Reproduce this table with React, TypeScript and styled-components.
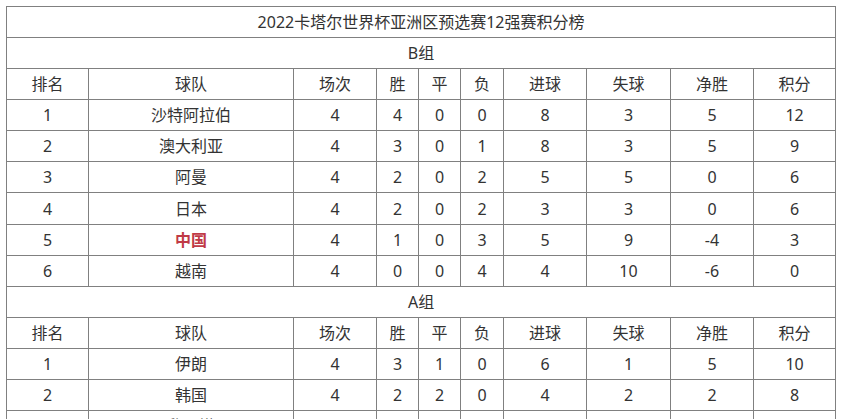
import React from "react";
import styled, { createGlobalStyle } from "styled-components";

const GlobalStyle = createGlobalStyle`
  html, body {
    margin: 0;
    padding: 0;
    background: #ffffff;
    overflow: hidden;
  }
  body {
    font-family: "Noto Sans", "Noto Sans CJK SC", sans-serif;
  }
`;

const Page = styled.div`
  padding: 6px;
`;

const Table = styled.table`
  border-collapse: collapse;
  table-layout: fixed;
  width: 830px;
  color: #333333;
  font-size: 16px;
`;

const Row = styled.tr`
  height: 31.08px;
`;

const Cell = styled.td<{ $highlight?: boolean }>`
  border: 1px solid #808080;
  padding: 0;
  text-align: center;
  vertical-align: middle;
  line-height: 20px;
  white-space: nowrap;
  font-weight: ${(p) => (p.$highlight ? 700 : 400)};
  color: ${(p) => (p.$highlight ? "#c03a46" : "#333333")};
`;

const columns = [82, 205, 83, 42, 42, 43, 83, 84, 83, 82];
const headers = ["排名", "球队", "场次", "胜", "平", "负", "进球", "失球", "净胜", "积分"];

type Team = { row: (string | number)[]; highlight?: boolean };

const groupB: Team[] = [
  { row: [1, "沙特阿拉伯", 4, 4, 0, 0, 8, 3, 5, 12] },
  { row: [2, "澳大利亚", 4, 3, 0, 1, 8, 3, 5, 9] },
  { row: [3, "阿曼", 4, 2, 0, 2, 5, 5, 0, 6] },
  { row: [4, "日本", 4, 2, 0, 2, 3, 3, 0, 6] },
  { row: [5, "中国", 4, 1, 0, 3, 5, 9, -4, 3], highlight: true },
  { row: [6, "越南", 4, 0, 0, 4, 4, 10, -6, 0] },
];

const groupA: Team[] = [
  { row: [1, "伊朗", 4, 3, 1, 0, 6, 1, 5, 10] },
  { row: [2, "韩国", 4, 2, 2, 0, 4, 2, 2, 8] },
  { row: [3, "黎巴嫩", 4, 1, 2, 1, 3, 3, 0, 5] },
];

const Group: React.FC<{ name: string; teams: Team[] }> = ({ name, teams }) => (
  <>
    <Row>
      <Cell colSpan={10}>{name}</Cell>
    </Row>
    <Row>
      {headers.map((h) => (
        <Cell key={h}>{h}</Cell>
      ))}
    </Row>
    {teams.map((t) => (
      <Row key={String(t.row[1])}>
        {t.row.map((v, i) => (
          <Cell key={i} $highlight={t.highlight && i === 1}>
            {v}
          </Cell>
        ))}
      </Row>
    ))}
  </>
);

export default function App() {
  return (
    <Page>
      <GlobalStyle />
      <Table>
        <colgroup>
          {columns.map((w, i) => (
            <col key={i} style={{ width: w }} />
          ))}
        </colgroup>
        <tbody>
          <Row>
            <Cell colSpan={10}>2022卡塔尔世界杯亚洲区预选赛12强赛积分榜</Cell>
          </Row>
          <Group name="B组" teams={groupB} />
          <Group name="A组" teams={groupA} />
        </tbody>
      </Table>
    </Page>
  );
}
